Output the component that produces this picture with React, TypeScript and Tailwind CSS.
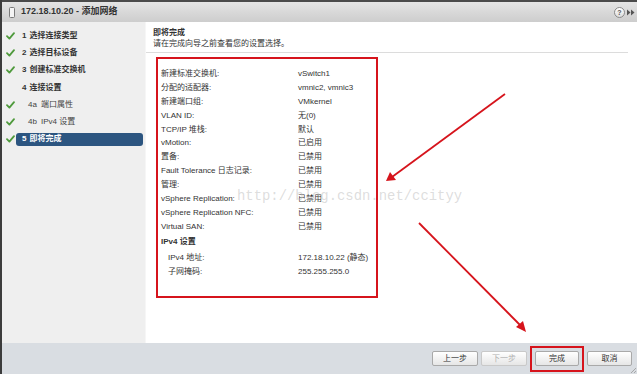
import React from "react";

const FONT = "font-['Liberation_Sans','Noto_Sans_CJK_SC',sans-serif]";

function Check() {
  return (
    <svg width="9" height="8" viewBox="0 0 9 8" className="block">
      <path d="M1 4.2 L3.4 6.6 L8 1.2" fill="none" stroke="#4f9a3c" strokeWidth="1.8" strokeLinecap="round" strokeLinejoin="round" />
    </svg>
  );
}

type Step = { num: string; text: string; check: boolean; sub?: boolean; active?: boolean };

const steps: Step[] = [
  { num: "1", text: "选择连接类型", check: true },
  { num: "2", text: "选择目标设备", check: true },
  { num: "3", text: "创建标准交换机", check: true },
  { num: "4", text: "连接设置", check: false },
  { num: "4a", text: "端口属性", check: true, sub: true },
  { num: "4b", text: "IPv4 设置", check: true, sub: true },
  { num: "5", text: "即将完成", check: true, active: true },
];

const rows: [string, string][] = [
  ["新建标准交换机:", "vSwitch1"],
  ["分配的适配器:", "vmnic2, vmnic3"],
  ["新建端口组:", "VMkernel"],
  ["VLAN ID:", "无(0)"],
  ["TCP/IP 堆栈:", "默认"],
  ["vMotion:", "已启用"],
  ["置备:", "已禁用"],
  ["Fault Tolerance 日志记录:", "已禁用"],
  ["管理:", "已禁用"],
  ["vSphere Replication:", "已禁用"],
  ["vSphere Replication NFC:", "已禁用"],
  ["Virtual SAN:", "已禁用"],
];

function Btn({ label, disabled }: { label: string; disabled?: boolean }) {
  return (
    <div
      className={
        "h-[15px] flex items-center justify-center rounded-[2px] border bg-gradient-to-b from-white to-[#e6e6e6] text-[8px] " +
        (disabled ? "border-[#c9c9c9] text-[#b0b0b0]" : "border-[#a9a9a9] text-[#333]")
      }
      style={{ width: label === "取消" ? 45 : label === "完成" ? 44 : 46 }}
    >
      {label}
    </div>
  );
}

export default function App() {
  return (
    <div className={`${FONT} relative w-[637px] h-[374px] flex flex-col overflow-hidden border-l-2 border-[#3c3c3c] bg-white`}>
      {/* Title bar */}
      <div className="h-[22px] shrink-0 border-t-2 border-[#4a4a4a] bg-gradient-to-b from-[#e4e4e4] to-[#cdcdcd] flex items-center">
        <div className="ml-[7px] w-[6px] h-[11px] rounded-[1.5px] border border-[#7a7a7a] bg-[#f4f4f4]" />
        <div className="ml-[6px] text-[9px] font-bold text-[#333]">172.18.10.20 - 添加网络</div>
        <div className="ml-auto flex items-center gap-[2px] mr-[2px]">
          <div className="w-[11px] h-[11px] rounded-full border border-[#8a8a8a] bg-gradient-to-b from-white to-[#dcdcdc] flex items-center justify-center text-[7px] font-bold text-[#555] leading-none">?</div>
          <svg width="8" height="7" viewBox="0 0 8 7">
            <path d="M0 0.5 L3.5 3.5 L0 6.5Z M4 0.5 L7.5 3.5 L4 6.5Z" fill="#555" />
          </svg>
        </div>
      </div>

      {/* Middle */}
      <div className="flex-1 flex min-h-0">
        {/* Sidebar */}
        <div className="w-[144px] shrink-0 bg-[#efefef] pt-[5px] border-r border-[#f6f6f6]">
          {steps.map((s) => (
            <div key={s.num} className="h-[17.3px] flex items-center">
              <div className="w-[14px] shrink-0 pl-[4px] flex items-center">{s.check && <Check />}</div>
              <div
                className={
                  "w-[127px] h-[13px] flex items-center text-[8px] leading-none " +
                  (s.active ? "bg-[#2c5580] rounded-[3px] text-white font-bold pl-[6px]" : "text-[#333] ") +
                  (s.sub ? "pl-[12px] text-[#444]" : s.active ? "" : "pl-[6px] font-bold")
                }
              >
                <span className={s.sub ? "mr-[4px]" : "mr-[3px]"}>{s.num}</span>
                <span>{s.text}</span>
              </div>
            </div>
          ))}
        </div>

        {/* Content */}
        <div className="flex-1 flex flex-col pr-[9px]">
          <div className="pl-[7px] pt-[5px] text-[8px] leading-[11px] text-[#333]">
            <div className="font-bold">即将完成</div>
            <div>请在完成向导之前查看您的设置选择。</div>
          </div>
          <div className="mt-[3px] h-px bg-[#dcdcdc]" />
          <div className="mt-[4px] ml-[10px] w-[222px] h-[241px] border-2 border-[#d6141c] pl-[3px] pt-[8px] text-[8px] text-[#333]">
            {rows.map(([k, v]) => (
              <div key={k} className="h-[13.9px] flex items-center">
                <div className="w-[137px] shrink-0">{k}</div>
                <div>{v}</div>
              </div>
            ))}
            <div className="h-[14px] mt-[1.8px] flex items-center font-bold">IPv4 设置</div>
            <div className="h-[14px] mt-[1.6px] flex items-center pl-[7px]">
              <div className="w-[130px] shrink-0">IPv4 地址:</div>
              <div>172.18.10.22 (静态)</div>
            </div>
            <div className="h-[13.4px] flex items-center pl-[7px]">
              <div className="w-[130px] shrink-0">子网掩码:</div>
              <div>255.255.255.0</div>
            </div>
          </div>
        </div>
      </div>

      {/* Footer */}
      <div className="h-[31px] shrink-0 bg-[#d9dde2] flex items-center justify-end pr-[5px] gap-[3px]">
        <Btn label="上一步" />
        <Btn label="下一步" disabled />
        <div className="w-[54px] h-[26px] border-2 border-[#d6141c] flex items-center justify-center">
          <Btn label="完成" />
        </div>
        <Btn label="取消" />
      </div>

      {/* Watermark */}
      <div className="absolute left-[235px] top-[190px] font-['Liberation_Mono',monospace] text-[13.9px] text-[#b4b4b4]/45 leading-none pointer-events-none">
        http://blog.csdn.net/ccityy
      </div>

      {/* Annotation arrows */}
      <svg className="absolute left-[-2px] top-0 pointer-events-none" width="637" height="374" viewBox="0 0 637 374">
        <line x1="505" y1="94" x2="392" y2="177" stroke="#d6141c" strokeWidth="1.8" />
        <path d="M386 181 L390 172 L396 180 Z" fill="#d6141c" />
        <line x1="419" y1="223" x2="521" y2="326" stroke="#d6141c" strokeWidth="1.8" />
        <path d="M526 332 L516 327 L523 321 Z" fill="#d6141c" />
        <path d="M631 373 L636 368 M634 373 L636 371" stroke="#999" strokeWidth="0.8" />
      </svg>
    </div>
  );
}
